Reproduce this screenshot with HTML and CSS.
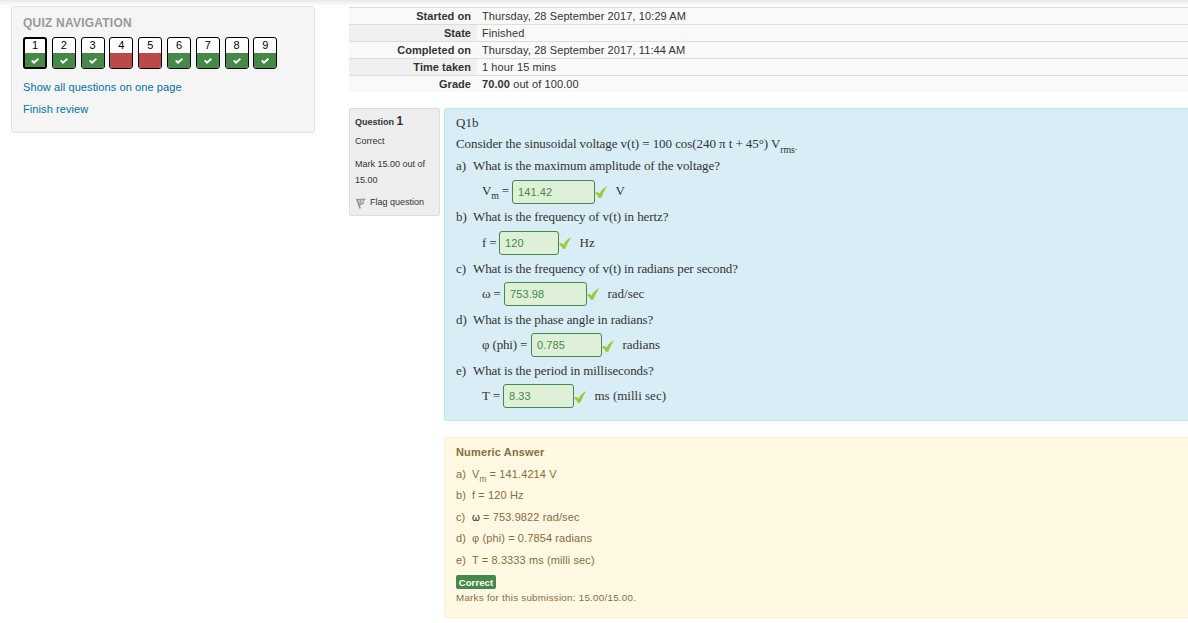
FILE: index.html
```html
<!DOCTYPE html>
<html lang="en">
<head>
<meta charset="utf-8">
<title>Quiz review</title>
<link rel="stylesheet" href="styles.css">
</head>
<body>
<svg class="defs" width="0" height="0">
  <symbol id="tick" viewBox="0 0 13 14"><path d="M0 8.2 L2 6.8 L4.5 8.6 C6.2 5.6 8.6 2.6 12.4 1 C10.2 4 8.2 8 6.4 12.4 L3.8 13 C3 10.8 1.6 9.2 0 8.2Z" fill="#9aca3c"/></symbol>
  <symbol id="navtick" viewBox="0 0 8 6"><path d="M0.7 2.3 L3 4.6 L7.4 0.7" fill="none" stroke="#fff" stroke-width="1.9"/></symbol>
</svg>
<div class="top-shade"></div>
<main class="page">
  <aside class="quiz-nav">
    <h2>QUIZ NAVIGATION</h2>
    <nav class="buttons">
      <a class="qn current ok"><b>1</b><i><svg><use href="#navtick"/></svg></i></a>
      <a class="qn ok"><b>2</b><i><svg><use href="#navtick"/></svg></i></a>
      <a class="qn ok"><b>3</b><i><svg><use href="#navtick"/></svg></i></a>
      <a class="qn bad"><b>4</b><i></i></a>
      <a class="qn bad"><b>5</b><i></i></a>
      <a class="qn ok"><b>6</b><i><svg><use href="#navtick"/></svg></i></a>
      <a class="qn ok"><b>7</b><i><svg><use href="#navtick"/></svg></i></a>
      <a class="qn ok"><b>8</b><i><svg><use href="#navtick"/></svg></i></a>
      <a class="qn ok"><b>9</b><i><svg><use href="#navtick"/></svg></i></a>
    </nav>
    <a class="link">Show all questions on one page</a>
    <a class="link finish">Finish review</a>
  </aside>
  <section class="content">
    <dl class="summary">
      <div><dt>Started on</dt><dd>Thursday, 28 September 2017, 10:29 AM</dd></div>
      <div class="alt"><dt>State</dt><dd>Finished</dd></div>
      <div><dt>Completed on</dt><dd>Thursday, 28 September 2017, 11:44 AM</dd></div>
      <div class="alt"><dt>Time taken</dt><dd>1 hour 15 mins</dd></div>
      <div><dt>Grade</dt><dd><b>70.00</b> out of 100.00</dd></div>
    </dl>
    <div class="question">
      <aside class="info">
        <h3>Question <span>1</span></h3>
        <p class="state">Correct</p>
        <p class="mark">Mark 15.00 out of 15.00</p>
        <p class="flag"><svg viewBox="0 0 10 12"><path d="M0.8 2 L4.2 11.4" stroke="#909090" stroke-width="1.6"/><path d="M1 2.5 L9.2 2 L7.2 4.4 L7.4 6.6 L3.5 8Z" fill="#ccc" stroke="#8c8c8c"/><path d="M4.2 2.5 L5 7" stroke="#999"/></svg><span>Flag question</span></p>
      </aside>
      <div class="panels">
        <div class="formulation">
          <p class="title">Q1b</p>
          <p class="intro">Consider the sinusoidal voltage v(t) = 100 cos(240 π t + 45°) V<sub>rms<sup>.</sup></sub></p>
          <p><span class="letter">a)</span><span class="ask">What is the maximum amplitude of the voltage?</span></p>
          <div class="answer"><label class="l-vm">V<sub>m</sub> =</label><span class="field wide">141.42</span><svg><use href="#tick"/></svg><span>V</span></div>
          <p><span class="letter">b)</span><span class="ask">What is the frequency of v(t) in hertz?</span></p>
          <div class="answer"><label class="l-f">f =</label><span class="field small">120</span><svg><use href="#tick"/></svg><span>Hz</span></div>
          <p><span class="letter">c)</span><span class="ask">What is the frequency of v(t) in radians per second?</span></p>
          <div class="answer"><label class="l-w">ω =</label><span class="field wide">753.98</span><svg><use href="#tick"/></svg><span>rad/sec</span></div>
          <p><span class="letter">d)</span><span class="ask">What is the phase angle in radians?</span></p>
          <div class="answer"><label class="l-phi">φ (phi) =</label><span class="field">0.785</span><svg><use href="#tick"/></svg><span>radians</span></div>
          <p><span class="letter">e)</span><span class="ask">What is the period in milliseconds?</span></p>
          <div class="answer"><label class="l-t">T =</label><span class="field">8.33</span><svg><use href="#tick"/></svg><span>ms (milli sec)</span></div>
        </div>
        <div class="feedback">
          <h4>Numeric Answer</h4>
          <p><span class="letter">a)</span><span>V<sub>m</sub> = 141.4214 V</span></p>
          <p><span class="letter">b)</span><span>f = 120 Hz</span></p>
          <p><span class="letter">c)</span><span><span class="omega">ω</span> = 753.9822 rad/sec</span></p>
          <p><span class="letter">d)</span><span>φ (phi) = 0.7854 radians</span></p>
          <p><span class="letter">e)</span><span>T = 8.3333 ms (milli sec)</span></p>
          <div class="badge">Correct</div>
          <div class="marks">Marks for this submission: 15.00/15.00.</div>
        </div>
      </div>
    </div>
  </section>
</main>
</body>
</html>
```
FILE: styles.css
```css
* { box-sizing: border-box; }
body { margin: 0; background: #fff; color: #333; font: 11px/16px "Liberation Sans", Arial, sans-serif; height: 623px; overflow: hidden; }
p, h2, h3, h4, dl, dd { margin: 0; }
sub { line-height: 0; font-size: 75%; vertical-align: -5px; }
sup { line-height: 0; font-size: 100%; vertical-align: 3px; }
.defs { display: block; }
.top-shade { height: 6px; background: linear-gradient(#e9e9e9, #fff); }
.page { display: flex; align-items: flex-start; padding-left: 11px; }
.quiz-nav { width: 304px; height: 127px; background: #f5f5f5; border: 1px solid #e3e3e3; border-radius: 3px; padding: 7px 11px; }
.quiz-nav h2 { font-size: 12px; line-height: 18px; color: #999; letter-spacing: 0.22px; }
.buttons { display: flex; gap: 4.8px; margin-top: 5px; }
.qn { width: 24px; height: 32px; border: 1px solid #000; border-radius: 3px; background: #fff; color: #000; overflow: hidden; text-align: center; }
.qn b { display: block; height: 15px; line-height: 15px; font-weight: 400; }
.qn i { display: flex; align-items: center; justify-content: center; height: 15px; }
.qn svg { width: 8px; height: 6px; }
.qn.ok i { background: #468847; }
.qn.bad i { background: #b94a48; }
.qn.current { border-width: 2px; }
.qn.current b { height: 14px; line-height: 13px; }
.link { display: block; color: #0070a8; margin-top: 10px; letter-spacing: 0.09px; }
.finish { margin-top: 6px; }
.content { flex: 1; margin-left: 34px; padding-top: 1px; }
.summary div { display: flex; height: 17px; border-top: 1px solid #ddd; background: #f9f9f9; }
.summary dt { width: 128px; padding-right: 6px; text-align: right; font-weight: 700; letter-spacing: 0.04px; }
.summary dd { padding-left: 5px; letter-spacing: 0.1px; }
.summary .alt dt { background: #f0f0f0; }
.question { display: flex; align-items: flex-start; margin-top: 16px; }
.info { width: 91px; height: 108px; background: #eee; border: 1px solid #dcdcdc; border-radius: 2px; padding: 4px 5px; font-size: 9px; }
.info h3 { font-size: 9px; line-height: 16px; }
.info h3 span { font-size: 12px; }
.state { margin-top: 3px; }
.mark { margin-top: 7px; }
.flag { display: flex; align-items: center; gap: 4px; margin-top: 6px; padding-left: 1px; }
.flag svg { width: 10px; height: 12px; fill: none; margin-top: 2px; }
.panels { flex: 1; margin-left: 4px; }
.formulation { height: 313px; background: #d9edf7; border: 1px solid #bce8f1; border-right: 0; border-radius: 3px 0 0 3px; padding: 3px 11px; font: 13px/21px "Liberation Serif", "Times New Roman", serif; }
.formulation p { height: 25.6px; line-height: 25px; display: flex; white-space: pre; }
.formulation .title { height: 21px; line-height: 21px; }
.formulation .intro { display: block; height: 20.2px; line-height: 21px; letter-spacing: -0.07px; }
.letter { width: 17px; }
.ask { letter-spacing: -0.09px; }
.answer { display: flex; align-items: center; height: 25.6px; padding-left: 26px; }
.answer label { white-space: nowrap; letter-spacing: -0.15px; }
.answer > label, .answer > span:last-child { line-height: 20px; margin-bottom: 0.3px; }
.l-vm { width: 30px; } .l-f { width: 17px; } .l-w { width: 22px; } .l-phi { width: 49px; } .l-t { width: 21px; }
.l-vm sub { vertical-align: -4px; }
.field { width: 71px; height: 24px; border: 1px solid #468847; border-radius: 3px; background: #dff0d8; color: #468847; padding-left: 5px; font: 11px/22px "Liberation Sans", Arial, sans-serif; letter-spacing: 0.1px; }
.wide { width: 83px; }
.small { width: 60px; }
.answer svg { width: 13px; height: 14px; margin: 1px 7.5px 0 0; }
.feedback { height: 181px; margin-top: 16px; background: #fff8e3; border: 1px solid #fbeed5; border-right: 0; border-radius: 3px 0 0 3px; padding: 4px 11px; color: #8a6d3b; letter-spacing: 0.11px; }
.feedback h4 { font-size: 11px; line-height: 21px; letter-spacing: 0.15px; }
.feedback p { display: flex; height: 21.5px; line-height: 22px; }
.feedback p:nth-of-type(even) { line-height: 21px; }
.feedback .letter { width: 16px; }
.feedback sub { vertical-align: -4px; }
.omega { color: #222; font-size: 10px; }
.badge { width: 40px; height: 14px; margin-top: 4px; border-radius: 2px; background: #468847; color: #fff; font-weight: 700; font-size: 9.5px; line-height: 15px; text-align: center; }
.marks { font-size: 9.8px; line-height: 18px; letter-spacing: 0.25px; }
```
